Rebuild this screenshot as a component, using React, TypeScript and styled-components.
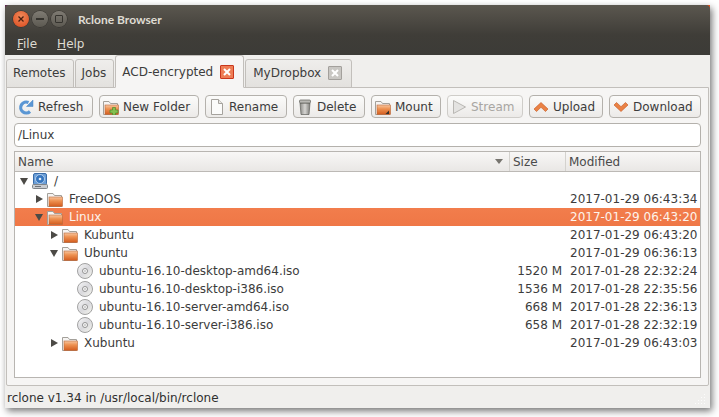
import styled, { createGlobalStyle } from "styled-components";

const GlobalStyle = createGlobalStyle`
  html, body {
    margin: 0;
    padding: 0;
    background: #ffffff;
  }
  body {
    font-family: "DejaVu Sans", sans-serif;
    font-size: 12px;
    color: #3c3c3c;
  }
`;

function FolderIcon({ badge }: { badge?: "plus" | "mount" }) {
  return (
    <svg width="16" height="16" viewBox="0 0 16 16">
      <defs>
        <linearGradient id="folderFront" x1="0" y1="0" x2="0" y2="1">
          <stop offset="0" stopColor="#f8c6a0" />
          <stop offset="0.4" stopColor="#ee9252" />
          <stop offset="1" stopColor="#d35c1e" />
        </linearGradient>
      </defs>
      <path d="M0.500 15.500V2.500h5.500l1.500 2h7v11z" fill="#f6f4f2" stroke="#a3a09a" />
      <rect x="2" y="6" width="13.500" height="9.500" fill="url(#folderFront)" stroke="#b9683a" strokeWidth="0.6" />
      {badge === "plus" && (
        <path d="M7 11h2.500V8.500h3V11H15v3h-2.500v2h-3v-2H7z" fill="#83bf50" stroke="#4f8a2a" strokeWidth="0.7" />
      )}
      {badge === "mount" && <path d="M10.500 15l3.500-3.500V15z" fill="#33302c" />}
    </svg>
  );
}

function DriveIcon() {
  return (
    <svg width="16" height="16" viewBox="0 0 16 16">
      <rect x="1.500" y="0.500" width="13" height="11.500" rx="1.500" fill="#6b9fd8" stroke="#3a6ca8" />
      <circle cx="8" cy="6" r="4.500" fill="#3676bf" stroke="#dbe8f6" strokeWidth="0.7" />
      <circle cx="8" cy="6" r="1.300" fill="#e6eff9" />
      <rect x="0.500" y="11.500" width="15" height="4" rx="1" fill="#c9ccd0" stroke="#7f8489" />
      <rect x="3" y="13" width="6" height="1" fill="#6f7479" />
    </svg>
  );
}

function DiscIcon() {
  return (
    <svg width="16" height="16" viewBox="0 0 16 16">
      <defs>
        <linearGradient id="discFace" x1="0" y1="0" x2="1" y2="1">
          <stop offset="0" stopColor="#f8f8f8" />
          <stop offset="0.5" stopColor="#d9d9dd" />
          <stop offset="1" stopColor="#f6f6ee" />
        </linearGradient>
      </defs>
      <circle cx="8" cy="8" r="7.500" fill="url(#discFace)" stroke="#a2a2a2" />
      <circle cx="8" cy="8" r="2.500" fill="#fafafa" stroke="#929292" />
      <circle cx="8" cy="8" r="0.800" fill="#a0a0a0" />
    </svg>
  );
}

function RefreshIcon() {
  return (
    <svg width="16" height="16" viewBox="0 0 16 16">
      <path d="M12 12.500A5.500 5.500 0 1 1 10.500 3.500" fill="none" stroke="#5b97d4" strokeWidth="3.200" />
      <path d="M8.500 7.500h6.500V1z" fill="#5b97d4" stroke="#4a86c4" strokeWidth="0.5" />
    </svg>
  );
}

function PageIcon() {
  return (
    <svg width="16" height="16" viewBox="0 0 16 16">
      <path d="M2.500 0.500h7l4 4v11h-11z" fill="#fbfbfa" stroke="#a5a29d" />
      <path d="M9.500 0.500v4h4" fill="#e8e6e3" stroke="#a5a29d" />
    </svg>
  );
}

function TrashIcon() {
  return (
    <svg width="16" height="16" viewBox="0 0 16 16">
      <defs>
        <linearGradient id="binBody" x1="0" y1="0" x2="1" y2="0">
          <stop offset="0" stopColor="#8b8a86" />
          <stop offset="0.5" stopColor="#d6d5d2" />
          <stop offset="1" stopColor="#7f7e7a" />
        </linearGradient>
      </defs>
      <path d="M3 4h10l-1 11.500H4z" fill="url(#binBody)" stroke="#5f5e5a" strokeWidth="0.7" />
      <rect x="2.500" y="1" width="11" height="3" rx="1" fill="#b9b8b4" stroke="#5f5e5a" strokeWidth="0.7" />
    </svg>
  );
}

function PlayIcon() {
  return (
    <svg width="16" height="16" viewBox="0 0 16 16">
      <path d="M2.500 1.500L14.500 8 2.500 14.500z" fill="#e4e3e1" stroke="#b9b7b3" />
    </svg>
  );
}

function ChevronIcon({ up }: { up?: boolean }) {
  return (
    <svg width="16" height="16" viewBox="0 0 16 16">
      <path
        d={up ? "M8 3.500L15 10l-2.500 2.500L8 8.300 3.500 12.500 1 10z" : "M8 12.500L15 6l-2.500-2.500L8 7.700 3.500 3.500 1 6z"}
        fill="#ea8245"
        stroke="#c4551f"
        strokeWidth="0.6"
      />
    </svg>
  );
}

function TabClose({ active }: { active?: boolean }) {
  return (
    <CloseBox $active={active}>
      <svg width="10" height="10" viewBox="0 0 10 10">
        <path d="M2 2l6 6M8 2l-6 6" stroke="#ffffff" strokeWidth="2" />
      </svg>
    </CloseBox>
  );
}

type TreeItem = {
  name: string;
  level: number;
  icon: "drive" | "folder" | "disc";
  arrow?: "open" | "closed";
  size?: string;
  modified?: string;
  selected?: boolean;
};

const items: TreeItem[] = [
  { name: "/", level: 0, icon: "drive", arrow: "open" },
  { name: "FreeDOS", level: 1, icon: "folder", arrow: "closed", modified: "2017-01-29 06:43:34" },
  { name: "Linux", level: 1, icon: "folder", arrow: "open", modified: "2017-01-29 06:43:20", selected: true },
  { name: "Kubuntu", level: 2, icon: "folder", arrow: "closed", modified: "2017-01-29 06:43:20" },
  { name: "Ubuntu", level: 2, icon: "folder", arrow: "open", modified: "2017-01-29 06:36:13" },
  { name: "ubuntu-16.10-desktop-amd64.iso", level: 3, icon: "disc", size: "1520 M", modified: "2017-01-28 22:32:24" },
  { name: "ubuntu-16.10-desktop-i386.iso", level: 3, icon: "disc", size: "1536 M", modified: "2017-01-28 22:35:56" },
  { name: "ubuntu-16.10-server-amd64.iso", level: 3, icon: "disc", size: "668 M", modified: "2017-01-28 22:36:13" },
  { name: "ubuntu-16.10-server-i386.iso", level: 3, icon: "disc", size: "658 M", modified: "2017-01-28 22:32:19" },
  { name: "Xubuntu", level: 2, icon: "folder", arrow: "closed", modified: "2017-01-29 06:43:03" },
];

const tools = [
  { label: "Refresh", width: 79, icon: <RefreshIcon /> },
  { label: "New Folder", width: 100, icon: <FolderIcon badge="plus" /> },
  { label: "Rename", width: 82, icon: <PageIcon /> },
  { label: "Delete", width: 72, icon: <TrashIcon /> },
  { label: "Mount", width: 70, icon: <FolderIcon badge="mount" /> },
  { label: "Stream", width: 76, icon: <PlayIcon />, disabled: true },
  { label: "Upload", width: 74, icon: <ChevronIcon up /> },
  { label: "Download", width: 92, icon: <ChevronIcon /> },
];

export default function App() {
  return (
    <Page>
      <GlobalStyle />
      <Window>
        <TitleArea>
          <TitleBar>
            <WindowButtons>
              <CloseButton>
                <svg width="8" height="8" viewBox="0 0 8 8">
                  <path d="M1.500 1.500l5 5M6.500 1.500l-5 5" stroke="#4a2010" strokeWidth="1.300" />
                </svg>
              </CloseButton>
              <GreyButton>
                <MinGlyph />
              </GreyButton>
              <GreyButton>
                <MaxGlyph />
              </GreyButton>
            </WindowButtons>
            <Title>Rclone Browser</Title>
          </TitleBar>
          <MenuBar>
            <MenuItem>
              <u>F</u>ile
            </MenuItem>
            <MenuItem>
              <u>H</u>elp
            </MenuItem>
          </MenuBar>
        </TitleArea>
        <Body>
          <Tabs>
            <Tab>Remotes</Tab>
            <Tab>Jobs</Tab>
            <Tab $active $closable>
              ACD-encrypted
              <TabClose active />
            </Tab>
            <Tab $closable>
              MyDropbox
              <TabClose />
            </Tab>
          </Tabs>
          <Pane>
            <Toolbar>
              {tools.map((tool) => (
                <ToolButton key={tool.label} $disabled={tool.disabled} $width={tool.width}>
                  {tool.icon}
                  {tool.label}
                </ToolButton>
              ))}
            </Toolbar>
            <PathBox>/Linux</PathBox>
            <Tree>
              <TreeHeader>
                <HeaderCell>
                  Name
                  <SortArrow />
                </HeaderCell>
                <HeaderCell>Size</HeaderCell>
                <HeaderCell $last>Modified</HeaderCell>
              </TreeHeader>
              {items.map((item) => (
                <Row key={item.name} $selected={item.selected}>
                  <NameCell $level={item.level}>
                    <ArrowBox>{item.arrow && <Arrow $open={item.arrow === "open"} />}</ArrowBox>
                    {item.icon === "drive" && <DriveIcon />}
                    {item.icon === "folder" && <FolderIcon />}
                    {item.icon === "disc" && <DiscIcon />}
                    <span>{item.name}</span>
                  </NameCell>
                  <SizeCell>{item.size}</SizeCell>
                  <DateCell>{item.modified}</DateCell>
                </Row>
              ))}
            </Tree>
          </Pane>
          <StatusBar>
            rclone v1.34 in /usr/local/bin/rclone
            <Grip>
              <svg width="12" height="12" viewBox="0 0 12 12">
                <path d="M9 1h1v1H9zM9 4h1v1H9zM6 4h1v1H6zM9 7h1v1H9zM6 7h1v1H6zM3 7h1v1H3zM9 10h1v1H9zM6 10h1v1H6zM3 10h1v1H3zM0 10h1v1H0z" fill="#fcfcfb" />
              </svg>
            </Grip>
          </StatusBar>
        </Body>
      </Window>
    </Page>
  );
}

const Page = styled.div`
  width: 719px;
  height: 417px;
  padding: 5px 9px 9px 5px;
  box-sizing: border-box;
  overflow: hidden;
`;

const Window = styled.div`
  height: 403px;
  display: flex;
  flex-direction: column;
  background: linear-gradient(90deg, #5e2750, #e95420);
  box-shadow: 2px 3px 7px rgba(0, 0, 0, 0.55);
`;

const TitleArea = styled.div`
  height: 50px;
  flex-shrink: 0;
  border-radius: 4px 4px 0 0;
  background: linear-gradient(#5b574f, #3f3d38 60%, #3c3b37);
`;

const TitleBar = styled.div`
  height: 25px;
  box-sizing: border-box;
  padding: 3px 0 0 8px;
  display: flex;
  align-items: center;
`;

const WindowButtons = styled.div`
  display: flex;
  gap: 3px;
  width: 65px;
`;

const CloseButton = styled.div`
  width: 16px;
  height: 16px;
  border-radius: 50%;
  display: flex;
  align-items: center;
  justify-content: center;
  background: radial-gradient(circle at 50% 35%, #f28a5a, #d9481c);
  box-shadow: 0 0 0 0.5px #2f2d29;
`;

const GreyButton = styled(CloseButton)`
  background: linear-gradient(#7f7b73, #5c5951);
`;

const MinGlyph = styled.div`
  width: 8px;
  height: 2px;
  background: #35332e;
`;

const MaxGlyph = styled.div`
  width: 6px;
  height: 6px;
  border: 1px solid #35332e;
  border-radius: 1px;
`;

const Title = styled.div`
  font-family: Lato, sans-serif;
  font-size: 12px;
  font-weight: 700;
  color: #dfdbd2;
`;

const MenuBar = styled.div`
  height: 25px;
  box-sizing: border-box;
  padding: 2px 0 0 12px;
  display: flex;
  align-items: center;
  gap: 20px;
`;

const MenuItem = styled.div`
  color: #dfdbd2;
  font-size: 12px;
`;

const Body = styled.div`
  flex: 1;
  min-height: 0;
  display: flex;
  flex-direction: column;
  background: #f0efed;
`;

const Tabs = styled.div`
  height: 33px;
  flex-shrink: 0;
  display: flex;
  align-items: flex-end;
  padding-left: 1px;
  margin-bottom: -1px;
  position: relative;
  z-index: 1;
`;

const Tab = styled.div<{ $active?: boolean; $closable?: boolean }>`
  height: ${(p) => (p.$active ? 33 : 29)}px;
  box-sizing: border-box;
  display: flex;
  align-items: center;
  gap: 7px;
  padding-top: 0;
  padding-bottom: ${(p) => (p.$active ? 0 : 2)}px;
  padding-left: ${(p) => (p.$closable && !p.$active ? 7 : 6)}px;
  padding-right: ${(p) => (p.$closable ? 9 : 7)}px;
  margin-right: 1px;
  color: #3c3c3c;
  border: 1px solid #c2bfbb;
  border-radius: 3px 3px 0 0;
  background: ${(p) => (p.$active ? "#f6f5f4" : "linear-gradient(#efeeec, #e3e1de)")};
  border-bottom-color: ${(p) => (p.$active ? "#f6f5f4" : "#c2bfbb")};
`;

const CloseBox = styled.div<{ $active?: boolean }>`
  width: 14px;
  height: 14px;
  box-sizing: border-box;
  display: flex;
  align-items: center;
  justify-content: center;
  border-radius: 1px;
  background: ${(p) => (p.$active ? "#ee7d55" : "#c9c7c3")};
  border: 1px solid ${(p) => (p.$active ? "#c9371d" : "#a3a09c")};
`;

const Pane = styled.div`
  height: 299px;
  flex-shrink: 0;
  box-sizing: border-box;
  margin: 0 1px;
  padding: 7px 7px 7px 7px;
  display: flex;
  flex-direction: column;
  gap: 5px;
  background: #f6f5f4;
  border: 1px solid #c2bfbb;
  border-radius: 0 0 2px 2px;
`;

const Toolbar = styled.div`
  display: flex;
  justify-content: space-between;
`;

const ToolButton = styled.div<{ $disabled?: boolean; $width: number }>`
  width: ${(p) => p.$width}px;
  height: 23px;
  box-sizing: border-box;
  display: flex;
  align-items: center;
  gap: 4px;
  padding-left: 3px;
  border: 1px solid ${(p) => (p.$disabled ? "#cfcdc9" : "#b4b1ac")};
  border-radius: 4px;
  background: linear-gradient(#fbfbfa, #eceae8);
  color: ${(p) => (p.$disabled ? "#a8a6a2" : "#3c3c3c")};
  white-space: nowrap;
`;

const PathBox = styled.div`
  height: 24px;
  box-sizing: border-box;
  display: flex;
  align-items: center;
  padding-left: 3px;
  background: #ffffff;
  border: 1px solid #b4b1ac;
  border-radius: 4px;
`;

const Tree = styled.div`
  flex: 1;
  min-height: 0;
  margin-top: -1px;
  background: #ffffff;
  border: 1px solid #b8b5b1;
`;

const TreeHeader = styled.div`
  display: grid;
  grid-template-columns: 495px 56px 1fr;
  height: 20px;
  box-sizing: border-box;
  background: linear-gradient(#f8f7f6, #e9e7e5);
  border-bottom: 1px solid #bcb9b5;
`;

const HeaderCell = styled.div<{ $last?: boolean }>`
  display: flex;
  align-items: center;
  justify-content: space-between;
  padding: 0 6px 0 3px;
  color: #4a4a4a;
  border-right: ${(p) => (p.$last ? "none" : "1px solid #d4d2ce")};
`;

const SortArrow = styled.div`
  width: 0;
  height: 0;
  border-left: 4px solid transparent;
  border-right: 4px solid transparent;
  border-top: 5px solid #77756f;
`;

const Row = styled.div<{ $selected?: boolean }>`
  display: grid;
  grid-template-columns: 495px 56px 1fr;
  height: 18px;
  align-items: center;
  background: ${(p) => (p.$selected ? "linear-gradient(#f27d4c, #ef7746)" : "transparent")};
  color: ${(p) => (p.$selected ? "#fdf3ec" : "#3c3c3c")};
`;

const NameCell = styled.div<{ $level: number }>`
  display: flex;
  align-items: center;
  padding-left: ${(p) => 2 + p.$level * 15}px;
  white-space: nowrap;

  svg {
    margin-left: 1px;
    margin-right: 6px;
    flex-shrink: 0;
  }
`;

const ArrowBox = styled.div`
  width: 14px;
  display: flex;
  justify-content: center;
  align-items: center;
`;

const Arrow = styled.div<{ $open: boolean }>`
  width: 0;
  height: 0;
  ${(p) =>
    p.$open
      ? `border-left: 4.5px solid transparent;
         border-right: 4.5px solid transparent;
         border-top: 7px solid #4c4a46;`
      : `border-top: 4.5px solid transparent;
         border-bottom: 4.5px solid transparent;
         border-left: 7px solid #4c4a46;`}
`;

const SizeCell = styled.div`
  text-align: right;
  padding-right: 4px;
`;

const DateCell = styled.div`
  padding-left: 4px;
  white-space: nowrap;
`;

const StatusBar = styled.div`
  flex: 1;
  box-sizing: border-box;
  padding: 2px 0 0 2px;
  display: flex;
  align-items: center;
  justify-content: space-between;
  color: #2f2f2f;
`;

const Grip = styled.div`
  display: flex;
  align-self: flex-end;
  margin: 0 3px 3px 0;
`;
